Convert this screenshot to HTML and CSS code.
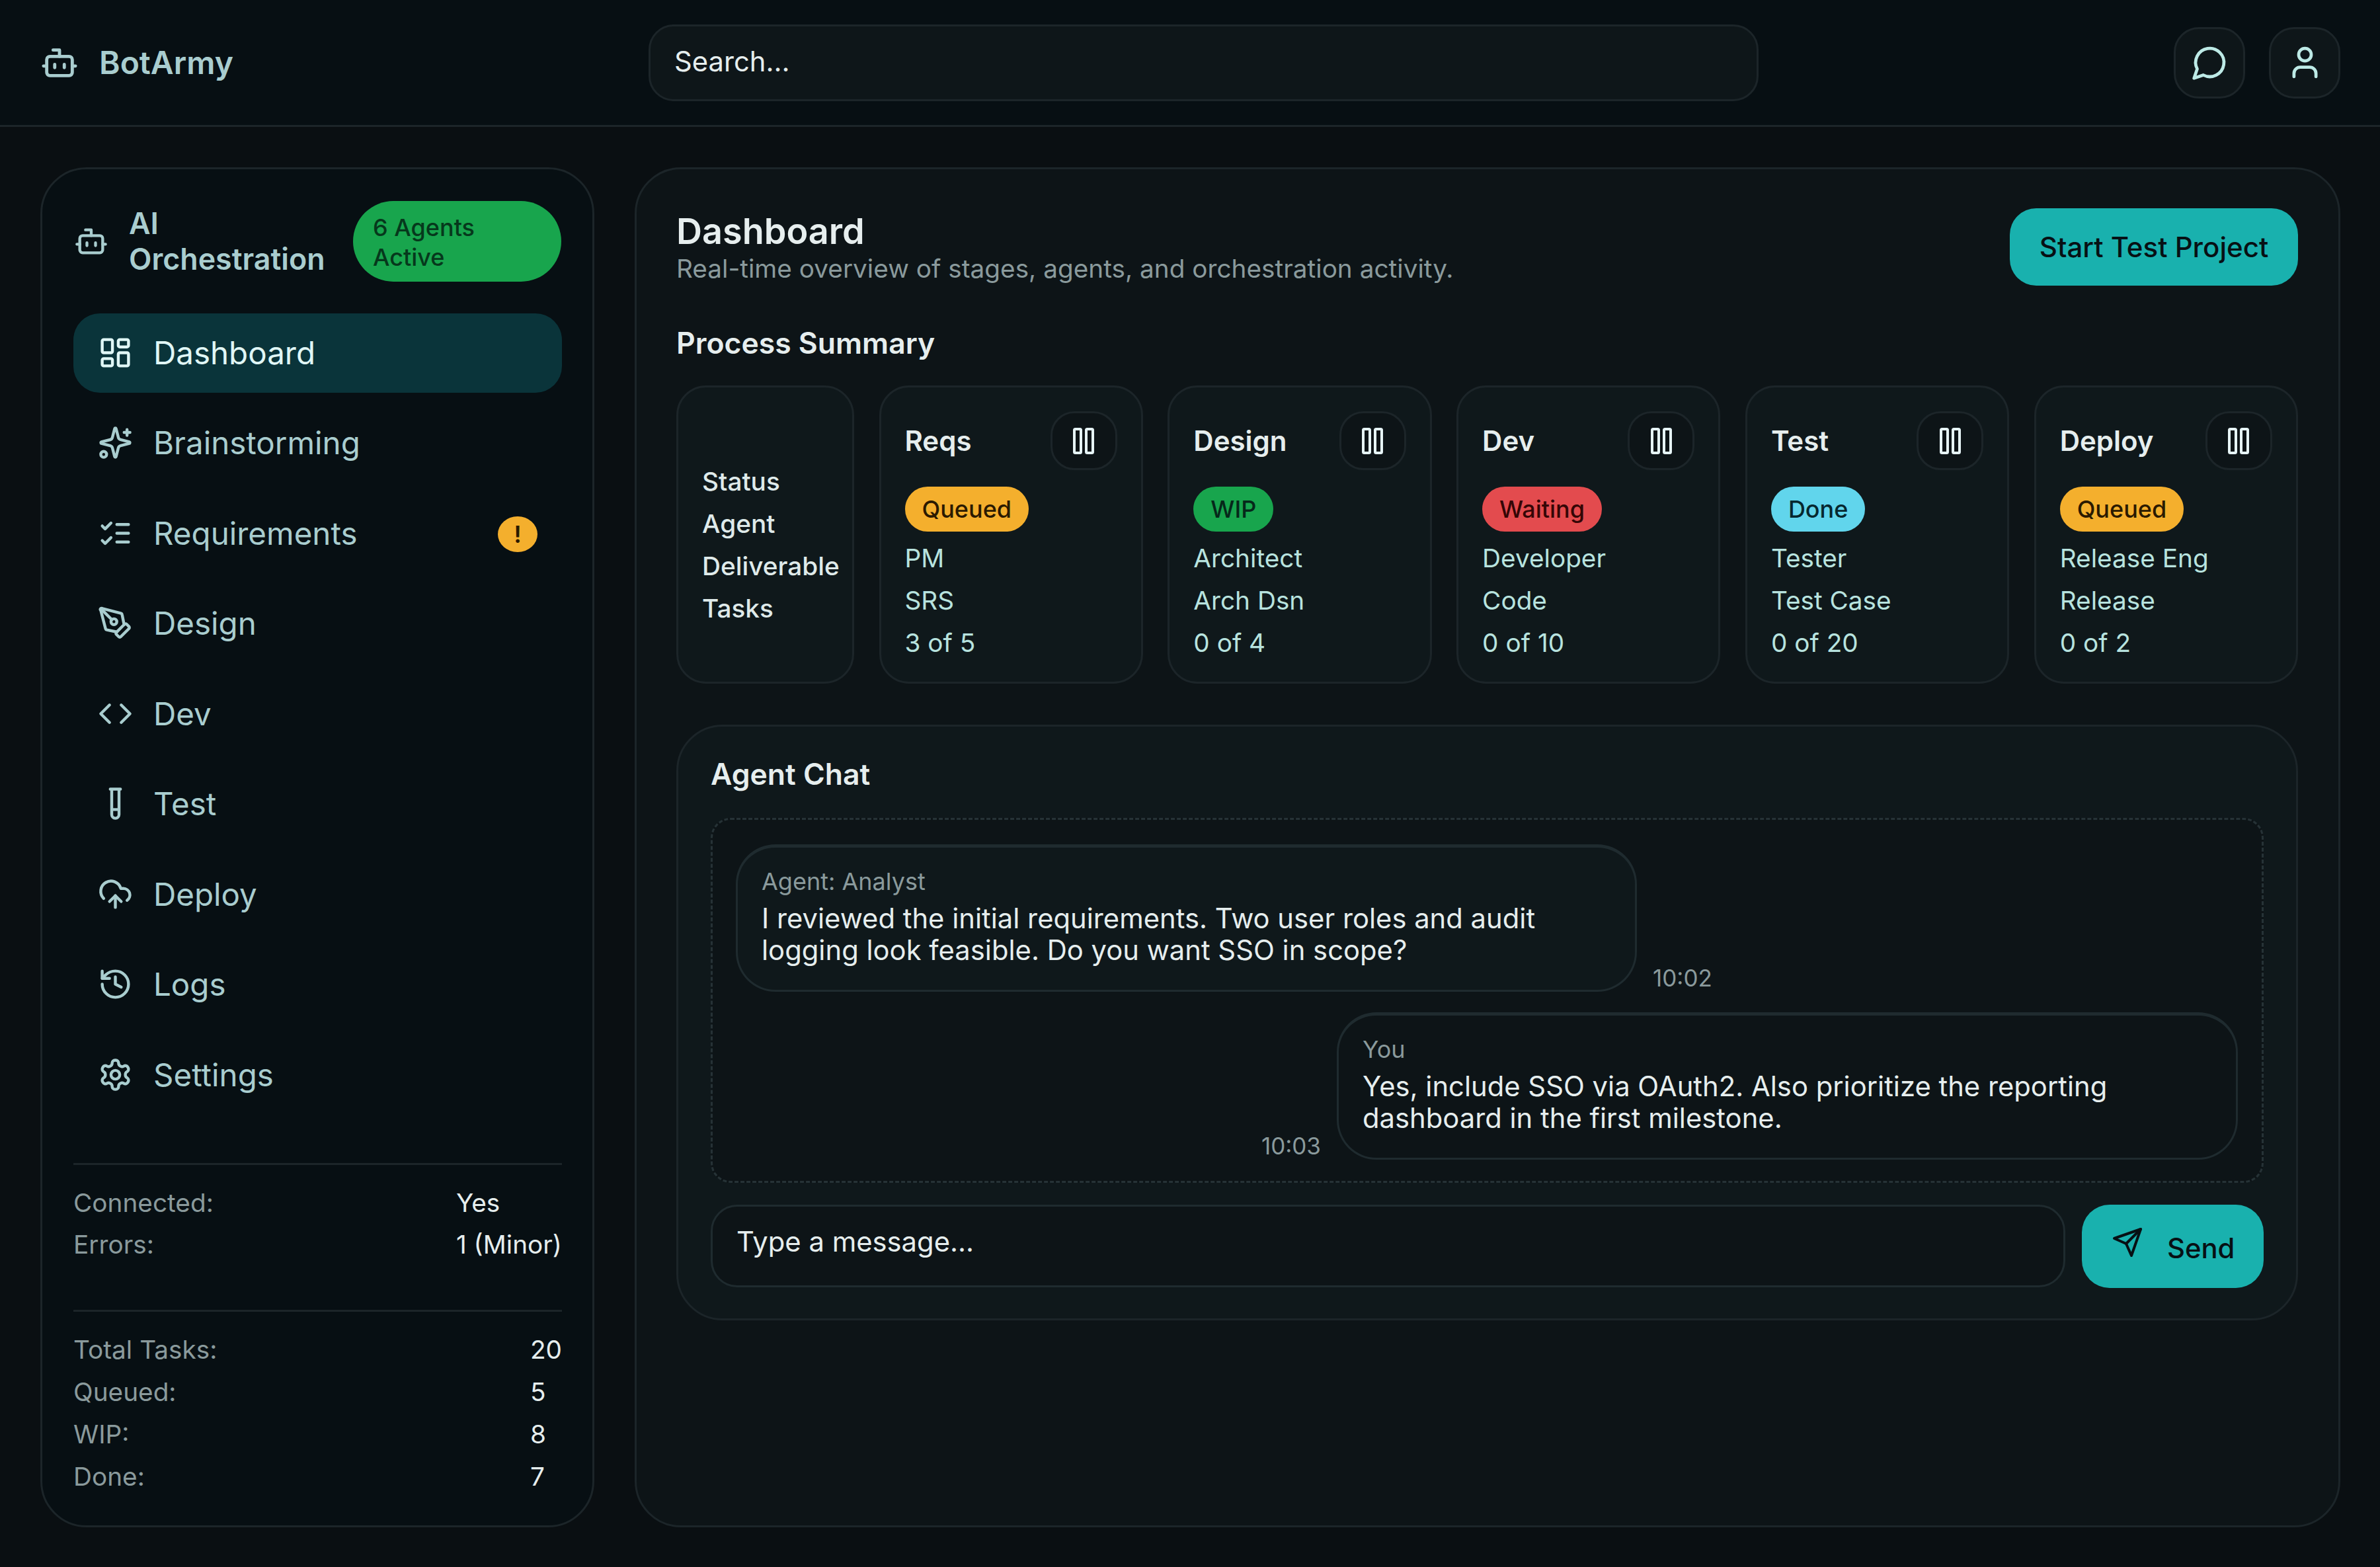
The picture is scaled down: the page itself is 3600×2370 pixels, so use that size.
FILE: index.html
```html
<!DOCTYPE html>
<html lang="en">
    <head>
        <meta charset="UTF-8" />
        <meta name="viewport" content="width=device-width, initial-scale=1.0" />
        <title>BotArmy</title>
        <link rel="stylesheet" href="styles.css">
    </head>
    <body>
        <svg class="sprite" width="0" height="0">
            <symbol id="i-bot" viewBox="0 0 24 24"><path d="M12 8V4H8"/><rect x="4" y="8" width="16" height="12" rx="2"/><path d="M2 14h2M20 14h2M15 13v2M9 13v2"/></symbol>
            <symbol id="i-pause" viewBox="0 0 32 40"><rect x="2" y="2" width="10" height="36" rx="1.500"/><rect x="20" y="2" width="10" height="36" rx="1.500"/></symbol>
        </svg>

        <header class="topbar">
            <div class="brand">
                <svg class="brand-icon"><use href="#i-bot"/></svg>
                <span>BotArmy</span>
            </div>
            <div class="search">Search...</div>
            <div class="top-actions">
                <button class="icon-btn">
                    <svg viewBox="0 0 24 24"><path d="M7.9 20A9 9 0 1 0 4 16.1L2 22Z"/></svg>
                </button>
                <button class="icon-btn">
                    <svg viewBox="0 0 24 24"><path d="M19 21v-2a4 4 0 0 0-4-4H9a4 4 0 0 0-4 4v2"/><circle cx="12" cy="7" r="4"/></svg>
                </button>
            </div>
        </header>

        <div class="layout">
            <aside class="sidebar">
                <div class="side-head">
                    <svg class="side-bot"><use href="#i-bot"/></svg>
                    <div class="side-title">AI Orchestration</div>
                    <div class="agents-pill">6 Agents Active</div>
                </div>

                <nav class="nav">
                    <a class="nav-item active">
                        <svg viewBox="0 0 24 24"><rect x="3" y="3" width="7" height="9" rx="1"/><rect x="14" y="3" width="7" height="5" rx="1"/><rect x="14" y="12" width="7" height="9" rx="1"/><rect x="3" y="16" width="7" height="5" rx="1"/></svg>
                        Dashboard
                    </a>
                    <a class="nav-item">
                        <svg viewBox="0 0 24 24"><path d="M9.94 15.5a2 2 0 0 0-1.44-1.44L2.4 12.5a.5.5 0 0 1 0-.96l6.1-1.58A2 2 0 0 0 9.94 8.5l1.58-6.1a.5.5 0 0 1 .96 0l1.58 6.1a2 2 0 0 0 1.44 1.44l6.1 1.58a.5.5 0 0 1 0 .96l-6.1 1.58a2 2 0 0 0-1.44 1.44l-1.58 6.1a.5.5 0 0 1-.96 0Z"/><path d="M20 3v4M22 5h-4"/><circle cx="4" cy="20" r="2"/></svg>
                        Brainstorming
                    </a>
                    <a class="nav-item">
                        <svg viewBox="0 0 24 24"><path d="m3 17 2 2 4-4M3 7l2 2 4-4M13 6h8M13 12h8M13 18h8"/></svg>
                        Requirements
                        <span class="nav-badge">!</span>
                    </a>
                    <a class="nav-item">
                        <svg viewBox="0 0 24 24"><path d="M15.7 21.3a1 1 0 0 1-1.4 0l-1.6-1.6a1 1 0 0 1 0-1.4l5.6-5.6a1 1 0 0 1 1.4 0l1.6 1.6a1 1 0 0 1 0 1.4Z"/><path d="m18 13-1.4-6.9a1 1 0 0 0-.7-.8L3.2 2a.5.5 0 0 0-1.2 1.2l3.3 12.7a1 1 0 0 0 .8.7L13 18"/><path d="m2.3 2.3 7.3 7.3"/><circle cx="11" cy="11" r="2"/></svg>
                        Design
                    </a>
                    <a class="nav-item">
                        <svg viewBox="0 0 24 24"><path d="m16 18 6-6-6-6M8 6l-6 6 6 6"/></svg>
                        Dev
                    </a>
                    <a class="nav-item">
                        <svg viewBox="0 0 24 24"><path d="M14.5 2v17.5a2.5 2.5 0 0 1-5 0V2M8.5 2h7M9.5 16h5"/></svg>
                        Test
                    </a>
                    <a class="nav-item">
                        <svg viewBox="0 0 24 24"><path d="M12 13v8M4 14.9A7 7 0 1 1 15.7 8h1.8a4.5 4.5 0 0 1 2.5 8.2"/><path d="m8 17 4-4 4 4"/></svg>
                        Deploy
                    </a>
                    <a class="nav-item">
                        <svg viewBox="0 0 24 24"><path d="M3 12a9 9 0 1 0 9-9 9.75 9.75 0 0 0-6.74 2.74L3 8"/><path d="M3 3v5h5M12 7v5l4 2"/></svg>
                        Logs
                    </a>
                    <a class="nav-item">
                        <svg viewBox="0 0 24 24"><path d="M12.22 2h-.44a2 2 0 0 0-2 2v.18a2 2 0 0 1-1 1.73l-.43.25a2 2 0 0 1-2 0l-.15-.08a2 2 0 0 0-2.73.73l-.22.38a2 2 0 0 0 .73 2.73l.15.1a2 2 0 0 1 1 1.72v.51a2 2 0 0 1-1 1.74l-.15.09a2 2 0 0 0-.73 2.73l.22.38a2 2 0 0 0 2.73.73l.15-.08a2 2 0 0 1 2 0l.43.25a2 2 0 0 1 1 1.73V20a2 2 0 0 0 2 2h.44a2 2 0 0 0 2-2v-.18a2 2 0 0 1 1-1.73l.43-.25a2 2 0 0 1 2 0l.15.08a2 2 0 0 0 2.73-.73l.22-.39a2 2 0 0 0-.73-2.73l-.15-.08a2 2 0 0 1-1-1.74v-.5a2 2 0 0 1 1-1.74l.15-.09a2 2 0 0 0 .73-2.73l-.22-.38a2 2 0 0 0-2.73-.73l-.15.08a2 2 0 0 1-2 0l-.43-.25a2 2 0 0 1-1-1.73V4a2 2 0 0 0-2-2Z"/><circle cx="12" cy="12" r="3"/></svg>
                        Settings
                    </a>
                </nav>

                <div class="stats stats-status">
                    <span class="stat-label">Connected:</span><span class="stat-value">Yes</span>
                    <span class="stat-label">Errors:</span><span class="stat-value">1 (Minor)</span>
                </div>
                <div class="stats stats-tasks">
                    <span class="stat-label">Total Tasks:</span><span class="stat-value">20</span>
                    <span class="stat-label">Queued:</span><span class="stat-value">5</span>
                    <span class="stat-label">WIP:</span><span class="stat-value">8</span>
                    <span class="stat-label">Done:</span><span class="stat-value">7</span>
                </div>
            </aside>

            <main class="main">
                <div class="page-head">
                    <div>
                        <h1>Dashboard</h1>
                        <p class="subtitle">Real-time overview of stages, agents, and orchestration activity.</p>
                    </div>
                    <button class="primary-btn">Start Test Project</button>
                </div>

                <h2 class="section-title">Process Summary</h2>
                <div class="stages">
                    <div class="stage-card label-card">
                        <div>Status</div>
                        <div>Agent</div>
                        <div>Deliverable</div>
                        <div>Tasks</div>
                    </div>
                    <div class="stage-card">
                        <div class="stage-head"><span>Reqs</span><button class="pause-btn"><svg><use href="#i-pause"/></svg></button></div>
                        <span class="status queued">Queued</span>
                        <div class="stage-line">PM</div>
                        <div class="stage-line">SRS</div>
                        <div class="stage-line">3 of 5</div>
                    </div>
                    <div class="stage-card">
                        <div class="stage-head"><span>Design</span><button class="pause-btn"><svg><use href="#i-pause"/></svg></button></div>
                        <span class="status wip">WIP</span>
                        <div class="stage-line">Architect</div>
                        <div class="stage-line">Arch Dsn</div>
                        <div class="stage-line">0 of 4</div>
                    </div>
                    <div class="stage-card">
                        <div class="stage-head"><span>Dev</span><button class="pause-btn"><svg><use href="#i-pause"/></svg></button></div>
                        <span class="status waiting">Waiting</span>
                        <div class="stage-line">Developer</div>
                        <div class="stage-line">Code</div>
                        <div class="stage-line">0 of 10</div>
                    </div>
                    <div class="stage-card">
                        <div class="stage-head"><span>Test</span><button class="pause-btn"><svg><use href="#i-pause"/></svg></button></div>
                        <span class="status done">Done</span>
                        <div class="stage-line">Tester</div>
                        <div class="stage-line">Test Case</div>
                        <div class="stage-line">0 of 20</div>
                    </div>
                    <div class="stage-card">
                        <div class="stage-head"><span>Deploy</span><button class="pause-btn"><svg><use href="#i-pause"/></svg></button></div>
                        <span class="status queued">Queued</span>
                        <div class="stage-line">Release Eng</div>
                        <div class="stage-line">Release</div>
                        <div class="stage-line">0 of 2</div>
                    </div>
                </div>

                <section class="chat">
                    <h2 class="chat-title">Agent Chat</h2>
                    <div class="messages">
                        <div class="msg">
                            <div class="bubble">
                                <div class="bubble-from">Agent: Analyst</div>
                                <div>I reviewed the initial requirements. Two user roles and audit logging look feasible. Do you want SSO in scope?</div>
                            </div>
                            <span class="msg-time">10:02</span>
                        </div>
                        <div class="msg mine">
                            <span class="msg-time">10:03</span>
                            <div class="bubble">
                                <div class="bubble-from">You</div>
                                <div>Yes, include SSO via OAuth2. Also prioritize the reporting dashboard in the first milestone.</div>
                            </div>
                        </div>
                    </div>
                    <div class="composer">
                        <div class="composer-input">Type a message...</div>
                        <button class="send-btn">
                            <svg viewBox="0 0 24 24"><path d="m22 2-7 20-4-9-9-4Z"/><path d="M22 2 11 13"/></svg>
                            <span>Send</span>
                        </button>
                    </div>
                </section>
            </main>
        </div>
    </body>
</html>
```

FILE: styles.css
```css
* {
    box-sizing: border-box;
}

body {
    margin: 0;
    height: 2370px;
    background-color: #0a0f12;
    color: #e6eeee;
    font-family: Inter, "Noto Sans", sans-serif;
    font-size: 38.750px;
}

.sprite {
    position: absolute;
}

svg {
    fill: none;
    stroke: currentColor;
    stroke-width: 2;
    stroke-linecap: round;
    stroke-linejoin: round;
}

button {
    font-family: inherit;
    padding: 0;
    border: none;
}

/* top bar */
.topbar {
    display: grid;
    grid-template-columns: 921px 1679px 1fr;
    align-items: center;
    height: 192px;
    padding: 0 60px;
    background-color: #070f13;
    border-bottom: 3px solid #1c2529;
}

.brand {
    display: flex;
    align-items: center;
    gap: 31px;
    padding-left: 1px;
    color: #a9cdcf;
    font-size: 48px;
    font-weight: 600;
}

.brand-icon {
    width: 58px;
    height: 58px;
}

.search {
    display: flex;
    align-items: center;
    height: 116px;
    padding: 0 36px 4px;
    background-color: #0e1619;
    border: 3px solid #1c2529;
    border-radius: 38px;
    color: #e6eeee;
    font-size: 41.750px;
}

.top-actions {
    display: flex;
    justify-content: flex-end;
    gap: 36px;
}

.icon-btn {
    display: flex;
    align-items: center;
    justify-content: center;
    width: 108px;
    height: 108px;
    background-color: #0e1619;
    border: 3px solid #1c2529;
    border-radius: 38px;
    color: #bdeae6;
}

.icon-btn svg {
    width: 57px;
    height: 57px;
}

/* page */
.layout {
    display: grid;
    grid-template-columns: 838px 1fr;
    gap: 61px;
    padding: 61px 60px 60px 61px;
    height: 2178px;
}

.sidebar {
    padding: 47px 46px 0 47px;
    background-color: #070f13;
    border: 3px solid #1c2529;
    border-radius: 70px;
}

.side-head {
    display: flex;
    align-items: center;
    height: 123px;
}

.side-bot {
    width: 52px;
    height: 52px;
    margin-left: 1px;
    color: #a9cdcf;
}

.side-title {
    width: 339px;
    margin-left: 31px;
    color: #a9cdcf;
    font-size: 44.750px;
    font-weight: 600;
    line-height: 54px;
}

.agents-pill {
    width: 315px;
    padding: 18px 30px 14px;
    background-color: #18a54d;
    border-radius: 62px;
    color: #06381c;
    font-size: 36px;
    font-weight: 500;
    line-height: 45px;
}

.nav {
    display: flex;
    flex-direction: column;
    gap: 16.500px;
    margin-top: 48px;
}

.nav-item {
    display: flex;
    align-items: center;
    gap: 31px;
    height: 120px;
    padding: 0 37px 2px 37px;
    border-radius: 40px;
    color: #a9cdcf;
    font-size: 47.500px;
}

.nav-item svg {
    width: 53px;
    height: 53px;
}

.nav-item.active {
    background-color: #0a343a;
    color: #e0f7f6;
}

.nav-badge {
    display: flex;
    align-items: center;
    justify-content: center;
    width: 60px;
    height: 54px;
    margin-top: 3px;
    margin-left: auto;
    background-color: #f4af2d;
    border-radius: 50%;
    color: #2b1a00;
    font-size: 36px;
    font-weight: 600;
}

.stats {
    display: grid;
    grid-template-columns: 1fr auto;
    align-items: center;
    align-content: start;
    border-top: 3px solid #1c2529;
}

.stats-status {
    row-gap: 15.500px;
    height: 222px;
    margin-top: 73px;
    padding-top: 33px;
}

.stats-tasks {
    row-gap: 17px;
    height: 300px;
    padding-top: 33px;
}

.stat-label {
    color: #8a9a9c;
}

.stat-value {
    color: #e6eeee;
}

.main {
    padding: 59px 61px 60px 60px;
    background-color: #0d1417;
    border: 3px solid #1c2529;
    border-radius: 70px;
}

.page-head {
    display: flex;
    align-items: flex-start;
    justify-content: space-between;
}

h1 {
    margin: 0;
    padding-top: 5px;
    color: #e6eeee;
    font-size: 54px;
    font-weight: 600;
    line-height: 60px;
}

.subtitle {
    margin: 2px 0 0;
    color: #8a9a9c;
    line-height: 48px;
}

.primary-btn {
    width: 436px;
    height: 117px;
    background-color: #19b1ae;
    border-radius: 40px;
    color: #071014;
    font-size: 42px;
    font-weight: 500;
}

.section-title {
    margin: 57px 0 0;
    color: #e6eeee;
    font-size: 44.500px;
    font-weight: 600;
    line-height: 60px;
}

.stages {
    display: grid;
    grid-template-columns: 269px repeat(5, 1fr);
    gap: 37.500px;
    margin-top: 34px;
}

.stage-card {
    height: 451px;
    padding: 36px 36px 0;
    background-color: #0f181b;
    border: 3px solid #1c2529;
    border-radius: 45px;
}

.label-card {
    display: flex;
    flex-direction: column;
    justify-content: center;
    gap: 17px;
    padding: 30px 0 0 36px;
    color: #dfeaea;
    font-weight: 500;
}

.stage-head {
    display: flex;
    align-items: center;
    justify-content: space-between;
    margin-bottom: 25px;
    color: #e6eeee;
    font-size: 42px;
    font-weight: 600;
}

.pause-btn {
    display: flex;
    align-items: center;
    justify-content: center;
    width: 101px;
    height: 89px;
    background-color: #0d1417;
    border: 3px solid #1c2529;
    border-radius: 36px;
    color: #e6f4f6;
}

.pause-btn svg {
    width: 32px;
    height: 40px;
    stroke-width: 4;
}

.status {
    display: inline-block;
    height: 68px;
    margin-bottom: 8px;
    padding: 0 26px;
    border-radius: 34px;
    font-size: 36px;
    font-weight: 500;
    line-height: 68px;
}

.queued {
    background-color: #f4af2d;
    color: #2b1a00;
}

.wip {
    background-color: #18a54d;
    color: #06281a;
}

.waiting {
    background-color: #e34b4e;
    color: #350606;
}

.done {
    background-color: #61d5ec;
    color: #06282f;
}

.stage-line {
    height: 64px;
    color: #b8e3df;
    line-height: 64px;
}

.chat {
    height: 901px;
    margin-top: 62px;
    padding: 42px 49px 0;
    background-color: #0f181b;
    border: 3px solid #1c2529;
    border-radius: 70px;
}

.chat-title {
    margin: 0;
    color: #e6eeee;
    font-size: 44.500px;
    font-weight: 600;
    line-height: 60px;
}

.messages {
    display: flex;
    flex-direction: column;
    gap: 31px;
    height: 552px;
    margin-top: 36px;
    padding: 37px 36px 0 35px;
    background-color: #0d1417;
    border: 3px dashed #263236;
    border-radius: 30px;
}

.msg {
    display: flex;
    align-items: flex-end;
    gap: 24px;
}

.msg.mine {
    justify-content: flex-end;
}

.bubble {
    width: 1363px;
    padding: 29px 36px 36px;
    background-color: #0f181b;
    border: 3px solid #1f2b2f;
    border-top-width: 5px;
    border-radius: 60px;
    font-size: 41.750px;
    line-height: 48px;
}

.mine .bubble {
    background-color: #0d1417;
}

.bubble-from {
    margin-bottom: 10px;
    color: #8a9a9c;
    font-size: 36px;
    line-height: 44px;
}

.msg-time {
    color: #8a9a9c;
    font-size: 35px;
}

.composer {
    display: flex;
    gap: 25px;
    margin-top: 33px;
}

.composer-input {
    display: flex;
    flex: 1;
    align-items: center;
    height: 125px;
    padding: 0 36px 14px;
    background-color: #0d1417;
    border: 3px solid #1f2b2f;
    border-radius: 40px;
    font-size: 41.750px;
}

.send-btn {
    display: flex;
    align-items: center;
    gap: 36px;
    width: 275px;
    height: 126px;
    padding-left: 45px;
    background-color: #19b1ae;
    border-radius: 42px;
    color: #071014;
    font-size: 41.750px;
    font-weight: 500;
}

.send-btn svg {
    width: 48px;
    height: 48px;
    margin-top: -12px;
}

.send-btn span {
    margin-top: 6px;
}
```
